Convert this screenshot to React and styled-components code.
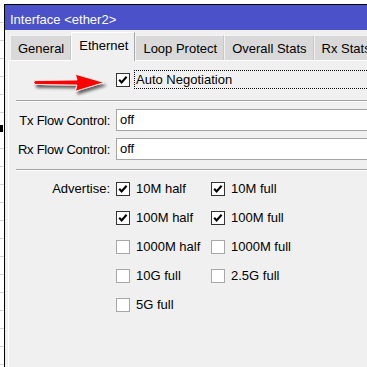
import React from 'react'
import styled, { createGlobalStyle } from 'styled-components'

const GlobalStyle = createGlobalStyle`
  html, body {
    margin: 0;
    padding: 0;
    background: #fff;
  }
  body {
    font-family: 'Liberation Sans', Arial, sans-serif;
    font-size: 13px;
    color: #000;
  }
`

const Page = styled.div`
  display: flex;
  width: 367px;
  height: 367px;
  overflow: hidden;
`

// the list window peeking out behind the dialog
const BackList = styled.div`
  flex: 0 0 4px;
  background:
    linear-gradient(#000, #000) 0 125px / 3px 7px no-repeat,
    repeating-linear-gradient(to bottom, #fff 0 17px, #d4d4d4 17px 18px) 0 5px;
`

const Window = styled.div`
  flex: 0 0 440px;
  margin-top: 4px;
  border-top: 1px solid #000;
  border-left: 1px solid #000;
  background: #f0f0f0;
  display: flex;
  flex-direction: column;
`

const TitleBar = styled.div`
  height: 25px;
  box-sizing: border-box;
  padding: 4px 0 0 5px;
  line-height: 21px;
  background: #4b51c9;
  color: #fff;
`

const TabRow = styled.div`
  display: flex;
  align-items: flex-end;
  height: 30px;
  padding-left: 5px;
`

const Tab = styled.div`
  box-sizing: border-box;
  padding: 0 6px 0 7px;
  white-space: nowrap;
  height: ${p => (p.$active ? '29px' : '25px')};
  line-height: ${p => (p.$active ? '26px' : '25px')};
  margin-bottom: ${p => (p.$active ? '-1px' : '0')};
  background: ${p => (p.$active ? '#f0f0f0' : '#d9d9d9')};
  border-top: 1px solid ${p => (p.$active ? '#fff' : '#f3f3f3')};
  border-left: 1px solid ${p => (p.$active ? '#fff' : '#f3f3f3')};
  border-right: 1px solid ${p => (p.$active ? '#a8a8a8' : '#c8c8c8')};
  position: relative;
  z-index: ${p => (p.$active ? 1 : 0)};
`

const Panel = styled.div`
  flex: 1;
  margin-left: 3px;
  border-top: 1px solid #fff;
  border-left: 1px solid #fff;
  display: flex;
  flex-direction: column;
`

const AutoRow = styled.div`
  display: flex;
  align-items: center;
  height: 19px;
  margin-top: 9px;
`

const Arrow = styled.svg`
  flex: 0 0 84px;
  margin-left: 20px;
  margin-top: 3px;
  overflow: visible;
`

const Box = styled.div`
  flex: 0 0 14px;
  width: 14px;
  height: 14px;
  box-sizing: border-box;
  background: #fff;
  border: 1px solid ${p => (p.$checked ? '#333' : '#a8a8a8')};
  display: flex;
  align-items: center;
  justify-content: center;
  margin-left: ${p => p.$ml || 0}px;
`

const FocusLabel = styled.div`
  flex: 1;
  height: 19px;
  box-sizing: border-box;
  margin-left: 4px;
  padding-left: 1px;
  line-height: 17px;
  border: 1px dotted #000;
  border-right: none;
`

const Separator = styled.div`
  margin: ${p => p.$top}px 0 0 7px;
  border-top: 1px solid #a5a5a5;
  border-bottom: 1px solid #fff;
`

const FormGrid = styled.div`
  display: grid;
  grid-template-columns: 101px 1fr;
  column-gap: 6px;
  row-gap: 7px;
  margin-top: 7px;
`

const Label = styled.div`
  text-align: right;
  align-self: center;
  white-space: nowrap;
  letter-spacing: -0.25px;
`

const TextBox = styled.div`
  height: 22px;
  box-sizing: border-box;
  background: #fff;
  border: 1px solid #a5a5a5;
  border-right: none;
  padding-left: 3px;
  line-height: 20px;
`

const AdvertiseSection = styled.div`
  display: flex;
  align-items: flex-start;
  margin-top: 11px;
`

const AdvLabel = styled.div`
  flex: 0 0 101px;
  padding-right: 6px;
  text-align: right;
  height: 14px;
  line-height: 14px;
`

const OptionsGrid = styled.div`
  display: grid;
  grid-template-columns: 95px 1fr;
  grid-auto-rows: 14px;
  row-gap: 15px;
`

const Option = styled.div`
  display: flex;
  align-items: center;
  gap: 6px;
  white-space: nowrap;
  height: 14px;
  line-height: 14px;
`

const Check = () => (
  <svg width="12" height="12" viewBox="0 0 12 12">
    <polyline points="2.2,5.8 4.6,8.4 9.6,2.8" fill="none" stroke="#000" strokeWidth="2.1" />
  </svg>
)

const CheckBox = ({ checked, ml }) => (
  <Box $checked={checked} $ml={ml}>{checked && <Check />}</Box>
)

const options = [
  ['10M half', true], ['10M full', true],
  ['100M half', true], ['100M full', true],
  ['1000M half', false], ['1000M full', false],
  ['10G full', false], ['2.5G full', false],
  ['5G full', false],
]

const tabs = ['General', 'Ethernet', 'Loop Protect', 'Overall Stats', 'Rx Stats']

export default function App() {
  return (
    <>
      <GlobalStyle />
      <Page>
        <BackList />
        <Window>
          <TitleBar>Interface &lt;ether2&gt;</TitleBar>
          <TabRow>
            {tabs.map(t => (
              <Tab key={t} $active={t === 'Ethernet'}>{t}</Tab>
            ))}
          </TabRow>
          <Panel>
            <AutoRow>
              <Arrow width="84" height="30" viewBox="0 0 84 30">
                <defs>
                  <filter id="arrowShadow" x="-20%" y="-60%" width="140%" height="220%">
                    <feDropShadow dx="2" dy="3" stdDeviation="1.6" floodColor="#000" floodOpacity="0.6" />
                  </filter>
                </defs>
                <path
                  d="M6 14.6 L48 14 L46.5 8.3 L75 16.5 L46.5 25.2 L48 19 L6 18.4 Q3.6 16.5 6 14.6 Z"
                  fill="#f00"
                  stroke="#fff"
                  strokeWidth="0.8"
                  filter="url(#arrowShadow)"
                />
              </Arrow>
              <CheckBox checked ml={3} />
              <FocusLabel>Auto Negotiation</FocusLabel>
            </AutoRow>
            <Separator $top={11} />
            <FormGrid>
              <Label>Tx Flow Control:</Label>
              <TextBox>off</TextBox>
              <Label>Rx Flow Control:</Label>
              <TextBox>off</TextBox>
            </FormGrid>
            <Separator $top={9} />
            <AdvertiseSection>
              <AdvLabel>Advertise:</AdvLabel>
              <OptionsGrid>
                {options.map(([name, on]) => (
                  <Option key={name}>
                    <CheckBox checked={on} />
                    {name}
                  </Option>
                ))}
              </OptionsGrid>
            </AdvertiseSection>
          </Panel>
        </Window>
      </Page>
    </>
  )
}
